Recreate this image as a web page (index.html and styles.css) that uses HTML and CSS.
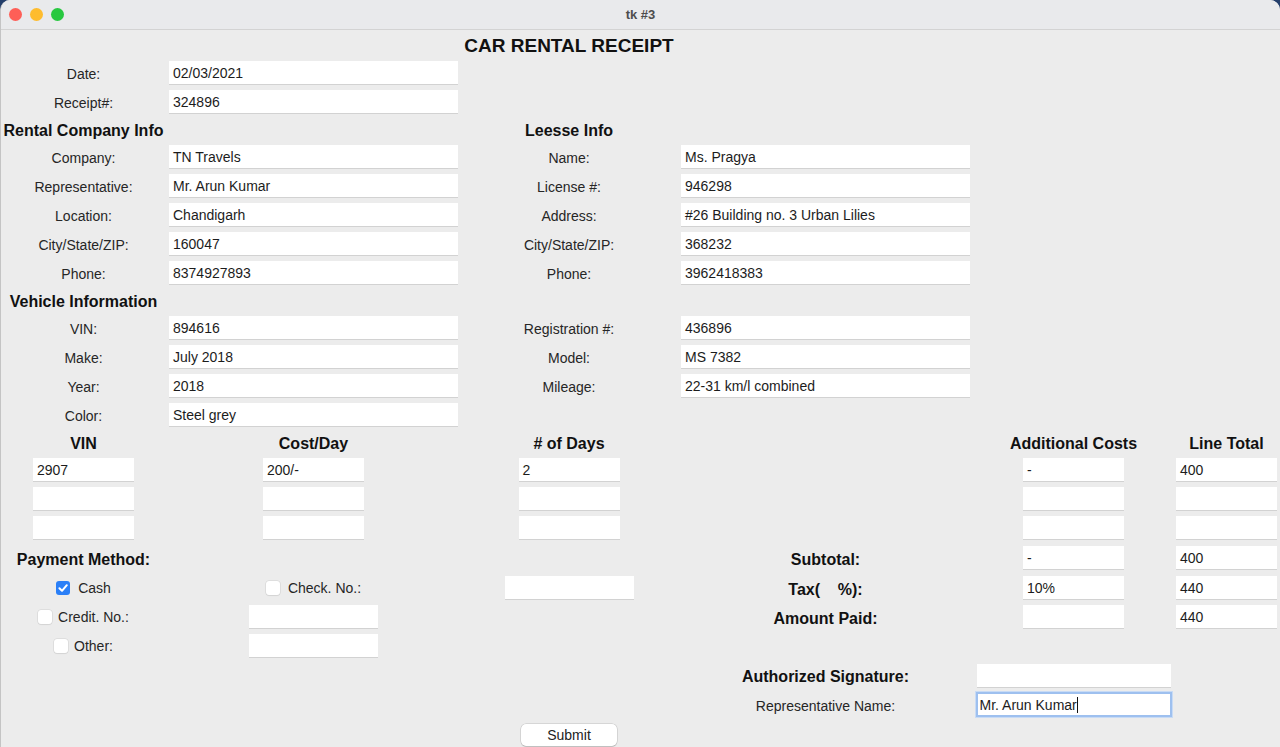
FILE: index.html
```html
<!DOCTYPE html>
<html>
<head>
<meta charset="utf-8">
<link rel="stylesheet" href="styles.css">
<title>tk #3</title>
</head>
<body>
<div class="window">
  <div class="titlebar">
    <div class="lights">
      <span class="light red"></span>
      <span class="light yellow"></span>
      <span class="light green"></span>
    </div>
    <div class="wtitle">tk #3</div>
  </div>
  <div class="form">
    <!-- title -->
    <div class="cell title c3">CAR RENTAL RECEIPT</div>

    <!-- date / receipt -->
    <div class="cell lbl c1 r2">Date:</div>
    <div class="cell c2 r2"><div class="entry wide">02/03/2021</div></div>
    <div class="cell lbl c1 r3">Receipt#:</div>
    <div class="cell c2 r3"><div class="entry wide">324896</div></div>

    <!-- section headers -->
    <div class="cell hdr c1 r4">Rental Company Info</div>
    <div class="cell hdr c3 r4">Leesse Info</div>

    <div class="cell lbl c1 r5">Company:</div>
    <div class="cell c2 r5"><div class="entry wide">TN Travels</div></div>
    <div class="cell lbl c3 r5">Name:</div>
    <div class="cell c4 r5"><div class="entry wide">Ms. Pragya</div></div>

    <div class="cell lbl c1 r6">Representative:</div>
    <div class="cell c2 r6"><div class="entry wide">Mr. Arun Kumar</div></div>
    <div class="cell lbl c3 r6">License #:</div>
    <div class="cell c4 r6"><div class="entry wide">946298</div></div>

    <div class="cell lbl c1 r7">Location:</div>
    <div class="cell c2 r7"><div class="entry wide">Chandigarh</div></div>
    <div class="cell lbl c3 r7">Address:</div>
    <div class="cell c4 r7"><div class="entry wide">#26 Building no. 3 Urban Lilies</div></div>

    <div class="cell lbl c1 r8">City/State/ZIP:</div>
    <div class="cell c2 r8"><div class="entry wide">160047</div></div>
    <div class="cell lbl c3 r8">City/State/ZIP:</div>
    <div class="cell c4 r8"><div class="entry wide">368232</div></div>

    <div class="cell lbl c1 r9">Phone:</div>
    <div class="cell c2 r9"><div class="entry wide">8374927893</div></div>
    <div class="cell lbl c3 r9">Phone:</div>
    <div class="cell c4 r9"><div class="entry wide">3962418383</div></div>

    <div class="cell hdr c1 r10">Vehicle Information</div>

    <div class="cell lbl c1 r11">VIN:</div>
    <div class="cell c2 r11"><div class="entry wide">894616</div></div>
    <div class="cell lbl c3 r11">Registration #:</div>
    <div class="cell c4 r11"><div class="entry wide">436896</div></div>

    <div class="cell lbl c1 r12">Make:</div>
    <div class="cell c2 r12"><div class="entry wide">July 2018</div></div>
    <div class="cell lbl c3 r12">Model:</div>
    <div class="cell c4 r12"><div class="entry wide">MS 7382</div></div>

    <div class="cell lbl c1 r13">Year:</div>
    <div class="cell c2 r13"><div class="entry wide">2018</div></div>
    <div class="cell lbl c3 r13">Mileage:</div>
    <div class="cell c4 r13"><div class="entry wide">22-31 km/l combined</div></div>

    <div class="cell lbl c1 r14">Color:</div>
    <div class="cell c2 r14"><div class="entry wide">Steel grey</div></div>

    <!-- line item headers -->
    <div class="cell hdr c1 r15">VIN</div>
    <div class="cell hdr c2 r15">Cost/Day</div>
    <div class="cell hdr c3 r15"># of Days</div>
    <div class="cell hdr c5 r15">Additional Costs</div>
    <div class="cell hdr c6 r15">Line Total</div>

    <div class="cell c1 r16"><div class="entry small">2907</div></div>
    <div class="cell c2 r16"><div class="entry small">200/-</div></div>
    <div class="cell c3 r16"><div class="entry small">2</div></div>
    <div class="cell c5 r16"><div class="entry small">-</div></div>
    <div class="cell c6 r16"><div class="entry small">400</div></div>

    <div class="cell c1 r17"><div class="entry small"></div></div>
    <div class="cell c2 r17"><div class="entry small"></div></div>
    <div class="cell c3 r17"><div class="entry small"></div></div>
    <div class="cell c5 r17"><div class="entry small"></div></div>
    <div class="cell c6 r17"><div class="entry small"></div></div>

    <div class="cell c1 r18"><div class="entry small"></div></div>
    <div class="cell c2 r18"><div class="entry small"></div></div>
    <div class="cell c3 r18"><div class="entry small"></div></div>
    <div class="cell c5 r18"><div class="entry small"></div></div>
    <div class="cell c6 r18"><div class="entry small"></div></div>

    <!-- payment + totals -->
    <div class="cell hdr c1 r19">Payment Method:</div>
    <div class="cell hdr c4 r19">Subtotal:</div>
    <div class="cell c5 r19"><div class="entry small">-</div></div>
    <div class="cell c6 r19"><div class="entry small">400</div></div>

    <div class="cell c1 r20"><label class="check"><span class="box on"><svg viewBox="0 0 14 14" width="14" height="14"><path d="M3.4 7.2 L6 9.8 L10.8 4.2" fill="none" stroke="#fff" stroke-width="2" stroke-linecap="round" stroke-linejoin="round"/></svg></span>Cash</label></div>
    <div class="cell c2 r20"><label class="check"><span class="box"></span>Check. No.:</label></div>
    <div class="cell c3 r20"><div class="entry mid"></div></div>
    <div class="cell hdr c4 r20 pre">Tax(    %):</div>
    <div class="cell c5 r20"><div class="entry small">10%</div></div>
    <div class="cell c6 r20"><div class="entry small">440</div></div>

    <div class="cell c1 r21"><label class="check tight"><span class="box"></span>Credit. No.:</label></div>
    <div class="cell c2 r21"><div class="entry mid"></div></div>
    <div class="cell hdr c4 r21">Amount Paid:</div>
    <div class="cell c5 r21"><div class="entry small"></div></div>
    <div class="cell c6 r21"><div class="entry small">440</div></div>

    <div class="cell c1 r22"><label class="check tight"><span class="box"></span>Other:</label></div>
    <div class="cell c2 r22"><div class="entry mid"></div></div>

    <div class="cell hdr c4 r23">Authorized Signature:</div>
    <div class="cell c5 r23"><div class="entry sig"></div></div>

    <div class="cell lbl c4 r24">Representative Name:</div>
    <div class="cell c5 r24"><div class="entry sig focus">Mr. Arun Kumar<span class="caret"></span></div></div>

    <div class="cell c3 r25"><button class="btn">Submit</button></div>
  </div>
</div>
</body>
</html>
```

FILE: styles.css
```css
html, body {
  margin: 0;
  padding: 0;
  background: #243f6b;
  width: 1280px;
  height: 747px;
  overflow: hidden;
}

.window {
  width: 1280px;
  height: 747px;
  background: #ececec;
  border-radius: 10px 10px 0 0;
  overflow: hidden;
  box-sizing: border-box;
  border-left: 1px solid #c4c4c4;
  font-family: "Liberation Sans", Arial, sans-serif;
  color: #222;
}

.titlebar {
  height: 29px;
  background: #e9eaec;
  border-bottom: 1px solid #d3d3d3;
  display: flex;
  align-items: center;
  justify-content: center;
  position: relative;
}

.lights {
  position: absolute;
  left: 8px;
  top: 8px;
  display: flex;
  gap: 8px;
}

.light {
  width: 13px;
  height: 13px;
  border-radius: 50%;
  display: block;
}
.light.red { background: #fe5f57; }
.light.yellow { background: #febc2e; }
.light.green { background: #28c840; }

.wtitle {
  font-family: "Liberation Sans", Arial, sans-serif;
  font-weight: bold;
  font-size: 13px;
  color: #4d4d4d;
}

.form {
  display: grid;
  grid-template-columns: 165px 295px 216px 297px 199px 107px;
  grid-template-rows: 28px 29px 29px 26px 29px 29px 29px 29px 29px 26px 29px 29px 29px 29px 26px 29px 29px 29px 31px 29px 29px 29px 30px 29px 28px;
}

.cell {
  display: flex;
  align-items: center;
  justify-content: center;
  white-space: nowrap;
  min-width: 0;
}

.c1 { grid-column: 1; }
.c2 { grid-column: 2; }
.c3 { grid-column: 3; }
.c4 { grid-column: 4; }
.c5 { grid-column: 5; }
.c6 { grid-column: 6; }

.title { grid-row: 1; font-weight: bold; font-size: 19px; color: #111; padding-top: 3px; }
.r2 { grid-row: 2; } .r3 { grid-row: 3; } .r4 { grid-row: 4; } .r5 { grid-row: 5; }
.r6 { grid-row: 6; } .r7 { grid-row: 7; } .r8 { grid-row: 8; } .r9 { grid-row: 9; }
.r10 { grid-row: 10; } .r11 { grid-row: 11; } .r12 { grid-row: 12; } .r13 { grid-row: 13; }
.r14 { grid-row: 14; } .r15 { grid-row: 15; } .r16 { grid-row: 16; } .r17 { grid-row: 17; }
.r18 { grid-row: 18; } .r19 { grid-row: 19; } .r20 { grid-row: 20; } .r21 { grid-row: 21; }
.r22 { grid-row: 22; } .r23 { grid-row: 23; } .r24 { grid-row: 24; } .r25 { grid-row: 25; }

.lbl {
  font-size: 14px;
  color: #262626;
  padding-top: 2px;
}

.hdr {
  font-size: 16px;
  font-weight: bold;
  color: #111;
  padding-top: 4px;
}

.pre { white-space: pre; }

.entry {
  height: 23px;
  box-sizing: border-box;
  background: #fff;
  box-shadow: 0 1px 0 #d2d2d2;
  font-size: 14px;
  color: #1c1c1c;
  padding-left: 4px;
  padding-top: 1px;
  display: flex;
  align-items: center;
  white-space: pre;
}

.entry.wide { width: 289px; }
.entry.small { width: 101px; }
.entry.mid { width: 129px; }
.entry.sig { width: 194px; }

.entry.focus {
  height: 25px;
  width: 196px;
  box-shadow: none;
  border: 2px solid #9ec0ef;
  outline: 1px solid #c8dbf5;
  padding-left: 2px;
}

.caret {
  display: inline-block;
  width: 1px;
  height: 16px;
  background: #111;
  margin-left: 0;
}

.check {
  display: flex;
  align-items: center;
  gap: 8px;
  font-size: 14px;
  color: #262626;
}

.check.tight { gap: 6px; }

.box {
  width: 14px;
  height: 14px;
  border-radius: 3px;
  background: #fff;
  box-shadow: 0 0 0 0.5px #cfcfcf, 0 1px 1px rgba(0, 0, 0, 0.08);
  display: flex;
  align-items: center;
  justify-content: center;
}

.box.on {
  background: #2a7ff7;
  box-shadow: none;
}

.btn {
  width: 96px;
  height: 22px;
  margin-top: 4px;
  background: #fff;
  border: none;
  border-radius: 5px;
  box-shadow: 0 0 0 0.5px rgba(0, 0, 0, 0.18), 0 1px 1px rgba(0, 0, 0, 0.12);
  font-family: "Liberation Sans", Arial, sans-serif;
  font-size: 14px;
  color: #222;
  padding: 0;
}
```
